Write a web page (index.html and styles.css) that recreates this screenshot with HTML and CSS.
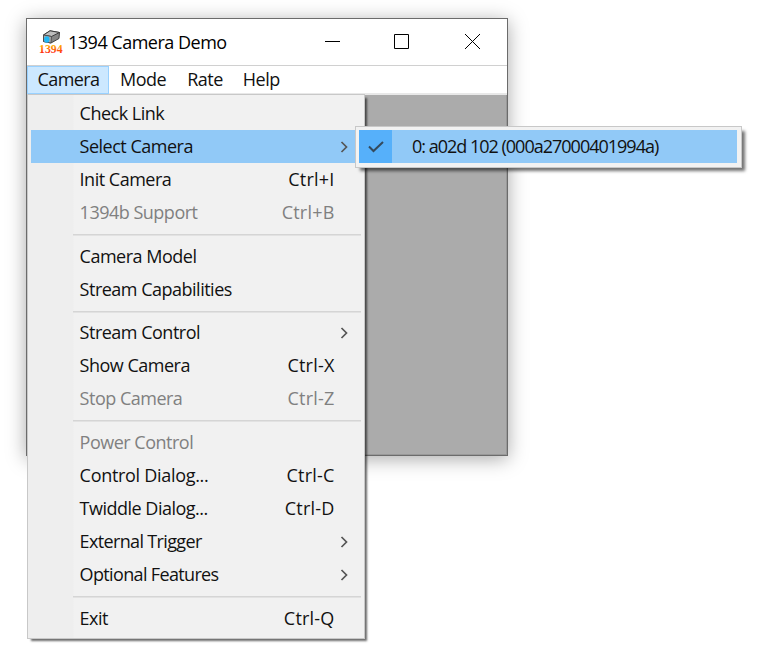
FILE: index.html
```html
<!DOCTYPE html>
<html lang="en">
<head>
<meta charset="utf-8">
<title>1394 Camera Demo</title>
<link rel="stylesheet" href="styles.css">
</head>
<body>
<div class="window">
  <header class="titlebar">
    <svg class="app-icon" width="24" height="24" viewBox="0 0 24 24">
      <path d="M3.500 5 10 .8 19.500 2.500 19 8.500 11 13 3.500 11.500z" fill="#858585" stroke="#333" stroke-width=".9"/>
      <path d="M3.500 5 10 .8 19.500 2.500 11.500 6.500z" fill="#bdbdbd" stroke="#333" stroke-width=".9"/>
      <path d="M3.500 5 11.500 6.500 11 13 3.500 11.500z" fill="#aaa" stroke="#444" stroke-width=".8"/>
      <ellipse cx="6.800" cy="9.500" rx="2.700" ry="3.200" fill="#20b8f5"/>
      <defs><linearGradient id="fire" x1="0" y1="0" x2="0" y2="1"><stop offset=".3" stop-color="#ffb400"/><stop offset=".8" stop-color="#ff3010"/></linearGradient></defs>
      <text class="icon-text" x="-1" y="22.500" textLength="23.500" lengthAdjust="spacingAndGlyphs" fill="url(#fire)">1394</text>
    </svg>
    <h1 class="title">1394 Camera Demo</h1>
    <svg class="controls" width="160" height="20" viewBox="0 0 160 20" fill="none" stroke="#000">
      <path d="M0 9.500h15M69.500 2.500h14v14h-14zM140 2l15 15M155 2l-15 15"/>
    </svg>
  </header>
  <nav class="menubar">
    <span class="tab open">Camera</span><span class="tab mode">Mode</span><span class="tab rate">Rate</span><span class="tab help">Help</span>
  </nav>
  <main class="client"></main>
</div>
<div class="menu">
  <div class="item"><span>Check Link</span></div>
  <div class="item active"><span>Select Camera</span><svg class="arrow" viewBox="0 0 8 12"><path d="M1.500 1 6.500 6l-5 5"/></svg></div>
  <div class="item"><span>Init Camera</span><span class="key">Ctrl+I</span></div>
  <div class="item off"><span>1394b Support</span><span class="key">Ctrl+B</span></div>
  <div class="sep tall"></div>
  <div class="item"><span>Camera Model</span></div>
  <div class="item"><span>Stream Capabilities</span></div>
  <div class="sep"></div>
  <div class="item"><span>Stream Control</span><svg class="arrow" viewBox="0 0 8 12"><path d="M1.500 1 6.500 6l-5 5"/></svg></div>
  <div class="item"><span>Show Camera</span><span class="key">Ctrl-X</span></div>
  <div class="item off"><span>Stop Camera</span><span class="key">Ctrl-Z</span></div>
  <div class="sep tall"></div>
  <div class="item off"><span>Power Control</span></div>
  <div class="item"><span class="dots">Control Dialog...</span><span class="key">Ctrl-C</span></div>
  <div class="item"><span>Twiddle Dialog...</span><span class="key">Ctrl-D</span></div>
  <div class="item"><span class="tight">External Trigger</span><svg class="arrow" viewBox="0 0 8 12"><path d="M1.500 1 6.500 6l-5 5"/></svg></div>
  <div class="item"><span class="tight">Optional Features</span><svg class="arrow" viewBox="0 0 8 12"><path d="M1.500 1 6.500 6l-5 5"/></svg></div>
  <div class="sep tall"></div>
  <div class="item"><span>Exit</span><span class="key">Ctrl-Q</span></div>
</div>
<div class="submenu">
  <div class="choice">
    <span class="check"><svg width="16" height="12" viewBox="0 0 16 12"><path d="M1 5.500 5.500 10 15 1"/></svg></span>
    <span class="choice-text">0: a02d 102 (000a27000401994a)</span>
  </div>
</div>
</body>
</html>
```
FILE: styles.css
```css
* { box-sizing: border-box; }
body {
  margin: 0;
  padding: 18px 0 0 26px;
  height: 665px;
  overflow: hidden;
  background: #fff;
  color: #111;
  font: 18px/33px "Open Sans", "Noto Sans", sans-serif;
  letter-spacing: -0.5px;
  white-space: nowrap;
}
.window {
  display: flex;
  flex-direction: column;
  width: 482px;
  height: 438px;
  border: 1px solid #6b6b6b;
  background: #fff;
  box-shadow: 0 3px 18px rgba(0, 0, 0, .34);
}
.titlebar {
  display: flex;
  align-items: center;
  height: 47px;
  padding-left: 13px;
  border-bottom: 1px solid #d0d0d0;
}
.app-icon { overflow: visible; }
.icon-text { font: bold 13px "Liberation Serif", serif; letter-spacing: 0; }
.title { margin: 0 0 0 4px; font-size: 18px; font-weight: 400; color: #000; }
.controls { margin: 0 22px 0 auto; }
.menubar {
  display: flex;
  height: 29px;
  line-height: 27px;
  border-bottom: 2px solid #e8e8e8;
}
.tab { margin-right: 20px; }
.rate { margin-left: 1px; }
.open {
  width: 82px;
  height: 28px;
  margin-right: 11px;
  padding-left: 9.500px;
  border: 1px solid #99d1ff;
  background: #cce8ff;
  line-height: 25px;
  letter-spacing: -.6px;
}
.client { flex: 1; background: #ababab; border-right: 1px solid #989898; border-bottom: 1px solid #989898; }
.menu {
  position: absolute;
  left: 27px;
  top: 94px;
  width: 338px;
  height: 545px;
  padding: 2px 3px 0;
  border: 1px solid #c8c8c8;
  background: linear-gradient(90deg, #eee 45px, #f1f1f1 46px);
  box-shadow: 3px 3px 2px -1px rgba(0, 0, 0, .58);
}
.item {
  display: flex;
  align-items: center;
  height: 33px;
  padding: 0 26.500px 0 48.600px;
  line-height: 33px;
}
.active { background: #91c9f7; }
.off { color: #808080; }
.key { margin-left: auto; letter-spacing: .2px; }
.dots { letter-spacing: -.3px; }
.tight { letter-spacing: -.65px; }
.arrow {
  width: 8px;
  height: 12px;
  margin: 0 -13px 0 auto;
  fill: none;
  stroke: #555;
  stroke-width: 1.700;
}
.sep { height: 10px; padding: 5px 0 0 42px; }
.tall { height: 11px; }
.sep::before { content: ""; display: block; height: 2px; background: linear-gradient(#d5d5d5 50%, #e2e2e2 50%); }
.submenu {
  position: absolute;
  left: 355px;
  top: 126px;
  width: 387px;
  height: 42px;
  padding: 3px;
  border: 1px solid #c8c8c8;
  background: #f2f2f2;
  box-shadow: 4px 4px 3px -1px rgba(0, 0, 0, .55);
}
.choice { display: flex; height: 33px; margin-right: 1px; background: #91c9f7; }
.check {
  display: flex;
  align-items: center;
  justify-content: center;
  width: 33px;
  background: #56b0fa;
}
.check path { fill: none; stroke: #344a5c; stroke-width: 2; }
.choice-text { margin-left: 20px; letter-spacing: -1px; }
```
